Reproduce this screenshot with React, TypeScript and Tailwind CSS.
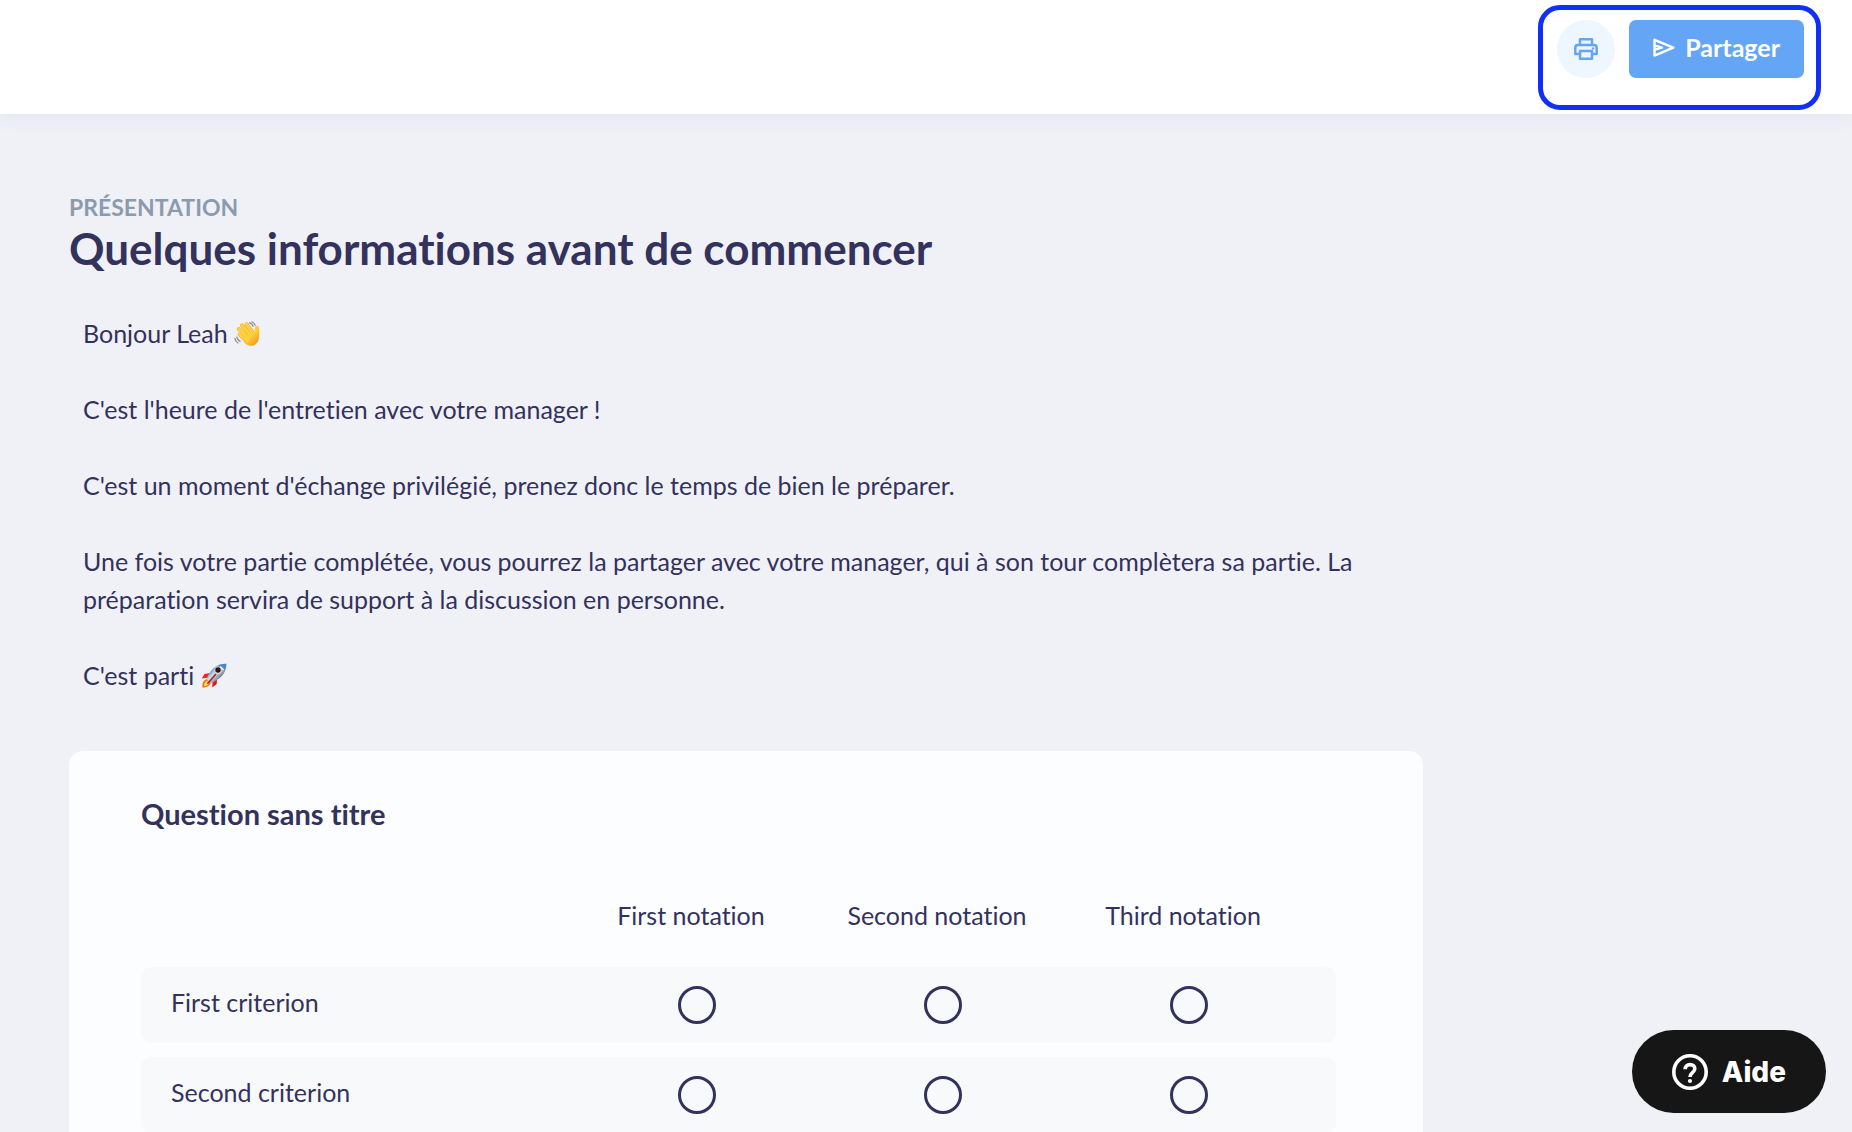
const criteria = ["First criterion", "Second criterion"];
const notations = ["First notation", "Second notation", "Third notation"];

function PrinterIcon() {
  return (
    <svg
      aria-hidden="true"
      viewBox="0 0 24 22"
      className="h-[22px] w-6"
      fill="none"
      stroke="currentColor"
      strokeWidth="2.5"
      strokeLinejoin="round"
    >
      <path d="M6 7V1.300h12V7" />
      <path d="M6 16H1.300v-6.200A2.800 2.800 0 0 1 4 7h16a2.800 2.800 0 0 1 2.700 2.800V16H18" />
      <path d="M6 13h12v7.700H6z" />
      <circle cx="19" cy="10.400" r="1.200" fill="currentColor" stroke="none" />
    </svg>
  );
}

function SendIcon() {
  return (
    <svg
      aria-hidden="true"
      viewBox="0 0 22 20"
      className="h-5 w-[22px]"
      fill="none"
      stroke="currentColor"
      strokeWidth="2.400"
      strokeLinejoin="round"
      strokeLinecap="round"
    >
      <path d="M1.500 1.800 20.300 9.600 1.500 17.600z" />
      <path d="M1.800 7.600 9 9.600l-7.200 2" />
    </svg>
  );
}

function HelpIcon() {
  return (
    <svg
      aria-hidden="true"
      viewBox="0 0 36 36"
      className="size-9"
      fill="none"
      stroke="currentColor"
      strokeWidth="3.600"
    >
      <circle cx="18" cy="18" r="16.200" />
      <path d="M13.200 15.200c0-2.900 2-4.600 4.800-4.600s4.800 1.600 4.800 4.200c0 4-4.800 3.800-4.800 8.200" />
      <circle cx="18" cy="27" r="2.100" fill="currentColor" stroke="none" />
    </svg>
  );
}

function WaveEmoji() {
  return (
    <svg
      role="img"
      aria-label="Main qui salue"
      viewBox="0 0 26 26"
      className="inline-block size-[26px] align-[-4px]"
      fill="none"
      strokeLinecap="round"
    >
      <defs>
        <linearGradient id="skin" x1="0" y1="0" x2="0.7" y2="1">
          <stop offset="0" stopColor="#ffdc5c" />
          <stop offset="0.6" stopColor="#fcc934" />
          <stop offset="1" stopColor="#ee9c1e" />
        </linearGradient>
      </defs>
      <path
        d="M9 14 18 8l2.300 3c.5-2 .4-3.500.8-5 .4-1.700 3.300-1.800 3.900.2.600 2.800.2 5.500.2 8.300.1 5-2.300 9.700-7.800 10.300-3.400.3-5.500-1.400-7.600-3.800z"
        fill="url(#skin)"
      />
      <g stroke="#e9a52a" strokeWidth="4">
        <path d="m12.500 15-7.700-7" />
        <path d="m15 12.500-7-8.200" />
        <path d="m18 11-5.300-7.600" />
        <path d="m11.500 18.500-6-5" />
      </g>
      <g stroke="#ffd03f" strokeWidth="3.200">
        <path d="m14.500 17-9.700-9" />
        <path d="m16.500 14.500-8.500-10.200" />
        <path d="m18.500 12-5.800-8.600" />
        <path d="m13.500 20-8-6.500" />
      </g>
      <g stroke="#85878f" strokeWidth="1.200">
        <path d="M15.500 1.800c1.800.4 3 1.600 3.600 3.500" />
        <path d="M17.800.8c1.800.8 2.900 2 3.300 3.600" />
        <path d="M2.800 16.200c.3 1.900 1.400 3.300 3.200 4.200" />
        <path d="M.8 17.400c.4 2 1.500 3.500 3.200 4.500" />
      </g>
    </svg>
  );
}

function RocketEmoji() {
  return (
    <svg
      role="img"
      aria-label="Fusée"
      viewBox="0 0 26 26"
      className="inline-block size-[26px] align-[-4px]"
    >
      <defs>
        <linearGradient id="hull" x1="0" y1="0" x2="1" y2="1">
          <stop offset="0.25" stopColor="#4f8fc4" />
          <stop offset="0.48" stopColor="#dce8f0" />
          <stop offset="0.75" stopColor="#56606f" />
        </linearGradient>
      </defs>
      <path d="M9 10 3.500 11 .8 15.500l6.200-.8z" fill="#ea2b1f" />
      <path d="m16 16.500-.3 4.500-4.500 3.600.4-6.600z" fill="#e3171b" />
      <path d="M5.500 16C2 17.500 1.200 21 1.500 24.700c3.500-.2 7-1.400 8.300-4.700z" fill="#f36a17" />
      <path d="M6 17.500c-2.500 1.300-3 3.500-3 5.700 2.500-.2 4.500-1.200 5.500-3.700z" fill="#ffe34a" />
      <path
        d="M25.300.8c.6 6.700-3.300 12.800-11.300 17.400l-4 2L5.500 16l2-4.200C11.500 4.500 17.500.4 25.300.8z"
        fill="url(#hull)"
      />
      <path
        d="M25.300.8c-3.300-.2-6.300.5-8.900 2.100 1.700-.3 5.700 2.400 6.400 5.500 1.900-2.300 2.700-4.900 2.500-7.600z"
        fill="#4b86c5"
      />
      <path d="M19 3.500c1.800.8 3 2 3.800 3.800" stroke="#f6f8fa" strokeWidth="1.300" fill="none" />
      <circle cx="17" cy="7.200" r="3.500" fill="#d8dbe0" />
      <circle cx="17" cy="7" r="2.700" fill="#32121a" />
      <path d="m7 20 7.500-8.500" stroke="#b3201f" strokeWidth="1.800" strokeLinecap="round" />
    </svg>
  );
}

function TopBar() {
  return (
    <header className="relative z-10 flex shrink-0 justify-end bg-white pt-[5px] pr-[31px] pb-1 shadow-[0_4px_16px_rgba(80,110,160,0.08)]">
      <div className="flex h-[105px] items-start gap-3.5 rounded-[22px] border-5 border-[#1230f5] pt-2.5 pr-3 pl-3.5">
        <button
          type="button"
          aria-label="Imprimer"
          className="flex size-[58px] items-center justify-center rounded-full bg-[#eef6ff] text-[#64a5f5]"
        >
          <PrinterIcon />
        </button>
        <button
          type="button"
          className="flex h-[58px] items-center gap-2.5 rounded-[7px] bg-[#64a5f5] px-6 pb-0.5 text-[25px] font-bold text-white"
        >
          <SendIcon />
          Partager
        </button>
      </div>
    </header>
  );
}

function Introduction() {
  return (
    <section>
      <p className="text-[23px] leading-7 font-bold text-[#8b9bad] uppercase">Présentation</p>
      <h1 className="text-[44px] leading-[54px] font-bold">
        Quelques informations avant de commencer
      </h1>
      <div className="mt-[39px] space-y-[38px] px-3.5 text-[25px] leading-[38px]">
        <p>
          Bonjour Leah <WaveEmoji />
        </p>
        <p>C'est l'heure de l'entretien avec votre manager !</p>
        <p>C'est un moment d'échange privilégié, prenez donc le temps de bien le préparer.</p>
        <p>
          Une fois votre partie complétée, vous pourrez la partager avec votre manager, qui à son
          tour complètera sa partie. La préparation servira de support à la discussion en personne.
        </p>
        <p>
          C'est parti <RocketEmoji />
        </p>
      </div>
    </section>
  );
}

function QuestionCard() {
  return (
    <section className="mt-[57px] rounded-[14px] bg-[#fcfdff] pt-[43px] pr-[87px] pb-16 pl-[72px]">
      <h2 id="question-title" className="text-[29px] leading-10 font-bold">
        Question sans titre
      </h2>
      <table
        aria-labelledby="question-title"
        className="mt-[31px] w-full table-fixed border-separate border-spacing-x-0 border-spacing-y-3.5 text-[25px]"
      >
        <colgroup>
          <col />
          <col className="w-[246px]" />
          <col className="w-[246px]" />
          <col className="w-[246px]" />
          <col className="w-6" />
        </colgroup>
        <thead>
          <tr className="h-[74px]">
            <td />
            {notations.map((notation) => (
              <th key={notation} scope="col" className="pr-3 font-normal">
                {notation}
              </th>
            ))}
            <td />
          </tr>
        </thead>
        <tbody>
          {criteria.map((criterion) => (
            <tr key={criterion} className="h-[76px] bg-[#f8f9fb]">
              <th scope="row" className="rounded-l-[10px] pb-1 pl-[30px] text-left font-normal">
                {criterion}
              </th>
              {notations.map((notation) => (
                <td key={notation}>
                  <input
                    type="radio"
                    name={criterion}
                    value={notation}
                    aria-label={`${criterion} : ${notation}`}
                    className="mx-auto block size-[38px] appearance-none rounded-full border-3 border-[#33325d] checked:bg-[#33325d]"
                  />
                </td>
              ))}
              <td className="rounded-r-[10px]" />
            </tr>
          ))}
        </tbody>
      </table>
    </section>
  );
}

export default function App() {
  return (
    <div className="flex h-screen flex-col bg-[#f0f1f6] font-['Lato',sans-serif] text-[#33325d] [font-variant-ligatures:none]">
      <TopBar />
      <main className="flex-1 overflow-y-auto px-[69px] pt-[79px] [scrollbar-width:none]">
        <div className="max-w-[1354px]">
          <Introduction />
          <QuestionCard />
        </div>
      </main>
      <button
        type="button"
        className="fixed right-[26px] bottom-[19px] z-20 flex h-[83px] items-center gap-3.5 rounded-full bg-[#161616] px-10 font-['Inter',sans-serif] text-[28px] font-extrabold text-white"
      >
        <HelpIcon />
        Aide
      </button>
    </div>
  );
}
